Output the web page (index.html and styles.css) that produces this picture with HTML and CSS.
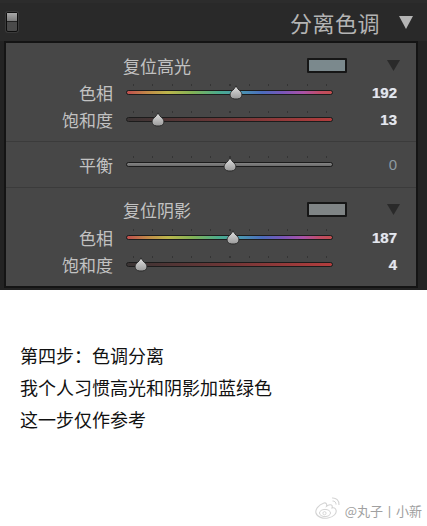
FILE: index.html
```html
<!DOCTYPE html>
<html lang="zh-CN">
<head>
<meta charset="utf-8">
<title>分离色调</title>
<link rel="stylesheet" href="styles.css">
</head>
<body>
<div class="app">
  <header class="head">
    <span class="toggle"><span class="toggle-top"></span></span>
    <h1 class="head-title">分离色调</h1>
    <svg class="head-tri" width="14" height="13" viewBox="0 0 14 13"><path d="M0 0 H14 L7 13 Z" fill="#b4b4b4"/></svg>
  </header>
  <div class="panel">
    <section class="sec sec-top">
      <div class="sec-head">
        <span class="sec-title">复位高光</span>
        <span class="swatch swatch-hi"></span>
        <svg class="sec-tri" width="13" height="11" viewBox="0 0 13 11"><path d="M0 0 H13 L6.5 11 Z" fill="#2a2a2a"/></svg>
      </div>
      <div class="row">
        <span class="label">色相</span>
        <div class="slider">
          <div class="ticks"></div>
          <div class="track track-hue"></div>
          <svg class="thumb" style="--p:0.533" width="14" height="15" viewBox="0 0 14 15"><defs><linearGradient id="tg1" x1="0" y1="0" x2="0" y2="1"><stop offset="0" stop-color="#e2e2e2"/><stop offset="1" stop-color="#9a9a9a"/></linearGradient></defs><path d="M7 0.8 C8 3 9.5 4.6 11.6 6.6 C13.6 8.6 13.2 12.4 10.4 13.5 C8.6 14.2 5.4 14.2 3.6 13.5 C0.8 12.4 0.4 8.6 2.4 6.6 C4.5 4.6 6 3 7 0.8 Z" fill="url(#tg1)" stroke="#2b2b2b" stroke-width="1"/></svg>
        </div>
        <span class="val">192</span>
      </div>
      <div class="row">
        <span class="label">饱和度</span>
        <div class="slider">
          <div class="ticks"></div>
          <div class="track track-sat"></div>
          <svg class="thumb" style="--p:0.13" width="14" height="15" viewBox="0 0 14 15"><path d="M7 0.8 C8 3 9.5 4.6 11.6 6.6 C13.6 8.6 13.2 12.4 10.4 13.5 C8.6 14.2 5.4 14.2 3.6 13.5 C0.8 12.4 0.4 8.6 2.4 6.6 C4.5 4.6 6 3 7 0.8 Z" fill="url(#tg1)" stroke="#2b2b2b" stroke-width="1"/></svg>
        </div>
        <span class="val">13</span>
      </div>
    </section>
    <section class="sec sec-mid">
      <div class="row">
        <span class="label">平衡</span>
        <div class="slider">
          <div class="ticks"></div>
          <div class="track track-bal"></div>
          <svg class="thumb" style="--p:0.5" width="14" height="15" viewBox="0 0 14 15"><path d="M7 0.8 C8 3 9.5 4.6 11.6 6.6 C13.6 8.6 13.2 12.4 10.4 13.5 C8.6 14.2 5.4 14.2 3.6 13.5 C0.8 12.4 0.4 8.6 2.4 6.6 C4.5 4.6 6 3 7 0.8 Z" fill="url(#tg1)" stroke="#2b2b2b" stroke-width="1"/></svg>
        </div>
        <span class="val val-dim">0</span>
      </div>
    </section>
    <section class="sec sec-bot">
      <div class="sec-head">
        <span class="sec-title">复位阴影</span>
        <span class="swatch swatch-lo"></span>
        <svg class="sec-tri" width="13" height="11" viewBox="0 0 13 11"><path d="M0 0 H13 L6.5 11 Z" fill="#2a2a2a"/></svg>
      </div>
      <div class="row">
        <span class="label">色相</span>
        <div class="slider">
          <div class="ticks"></div>
          <div class="track track-hue"></div>
          <svg class="thumb" style="--p:0.519" width="14" height="15" viewBox="0 0 14 15"><path d="M7 0.8 C8 3 9.5 4.6 11.6 6.6 C13.6 8.6 13.2 12.4 10.4 13.5 C8.6 14.2 5.4 14.2 3.6 13.5 C0.8 12.4 0.4 8.6 2.4 6.6 C4.5 4.6 6 3 7 0.8 Z" fill="url(#tg1)" stroke="#2b2b2b" stroke-width="1"/></svg>
        </div>
        <span class="val">187</span>
      </div>
      <div class="row">
        <span class="label">饱和度</span>
        <div class="slider">
          <div class="ticks"></div>
          <div class="track track-sat"></div>
          <svg class="thumb" style="--p:0.04" width="14" height="15" viewBox="0 0 14 15"><path d="M7 0.8 C8 3 9.5 4.6 11.6 6.6 C13.6 8.6 13.2 12.4 10.4 13.5 C8.6 14.2 5.4 14.2 3.6 13.5 C0.8 12.4 0.4 8.6 2.4 6.6 C4.5 4.6 6 3 7 0.8 Z" fill="url(#tg1)" stroke="#2b2b2b" stroke-width="1"/></svg>
        </div>
        <span class="val">4</span>
      </div>
    </section>
  </div>
</div>
<div class="notes">
  <p>第四步：色调分离</p>
  <p>我个人习惯高光和阴影加蓝绿色</p>
  <p>这一步仅作参考</p>
</div>
<div class="watermark">
  <svg class="wb-logo" width="28" height="26" viewBox="0 0 28 26">
    <path d="M10 8 C4 10 1 15 2 18 C3 22 9 24 14 23 C20 22 23 18 22 15 C21.5 13 19.5 12.5 18 13 C18.6 11 18 9.6 16 9.8 C14.5 10 13 10.8 12.5 11.2 C13 9.5 12.5 7.5 10 8 Z" fill="none" stroke="#d4d4d4" stroke-width="1.1"/>
    <ellipse cx="11" cy="18" rx="5.5" ry="3.6" fill="none" stroke="#d4d4d4" stroke-width="1"/>
    <circle cx="10.5" cy="18.2" r="1.6" fill="none" stroke="#d4d4d4" stroke-width="0.9"/>
    <path d="M18 3 C22 2.5 25.5 5.5 25 10" fill="none" stroke="#d4d4d4" stroke-width="1.1"/>
    <path d="M18.5 6 C20.5 5.8 22.3 7.4 22 9.6" fill="none" stroke="#d4d4d4" stroke-width="1"/>
  </svg>
  <span class="wb-text">@丸子丨小新</span>
</div>
</body>
</html>
```
FILE: styles.css
```css
* { box-sizing: border-box; }
html, body { margin: 0; padding: 0; }
body {
  width: 427px;
  height: 526px;
  background: #ffffff;
  font-family: "Noto Sans CJK SC", "Noto Sans", sans-serif;
  overflow: hidden;
}
.app {
  height: 290px;
  background: #232323;
  border-top: 3px solid #2c2c2c;
  padding: 0 9px 2px 4px;
  box-shadow: inset 0 1px 0 #3a3a3a;
}
.head {
  height: 38px;
  display: flex;
  align-items: center;
  background: #292929;
  margin: 0 -9px 0 -4px;
  padding: 0 14px 0 6px;
}
.toggle {
  width: 12px;
  height: 20px;
  border: 1px solid #0e0e0e;
  border-radius: 2px;
  background: #4a4a4a;
  display: flex;
  flex-direction: column;
  box-shadow: 0 0 0 1px #3a3a3a;
}
.toggle-top {
  height: 9px;
  background: linear-gradient(#a8a8a8, #7a7a7a);
  border-bottom: 1px solid #222;
}
.head-title {
  margin: 0 19px 0 auto;
  font-size: 22px;
  font-weight: 400;
  color: #b4b4b4;
  line-height: 1;
  letter-spacing: 0.5px;
}
.head-tri { display: block; margin-top: 1px; }
.panel {
  height: 247px;
  background: #474747;
  border: 2px solid #141414;
  display: flex;
  flex-direction: column;
}
.sec { border-bottom: 1px solid #3b3b3b; }
.sec-top { height: 99px; padding-top: 12px; }
.sec-mid { height: 46px; padding-top: 9px; }
.sec-bot { flex: 1; padding-top: 11px; border-bottom: 0; }
.sec-head {
  height: 20px;
  display: flex;
  align-items: center;
  padding-left: 117px;
  padding-right: 16px;
  margin-bottom: 4px;
}
.sec-bot .sec-head { margin-bottom: 5px; }
.sec-title {
  font-size: 17px;
  color: #c2c2c2;
  line-height: 1;
}
.swatch {
  margin-left: auto;
  width: 40px;
  height: 15px;
  border: 2px solid #161616;
  border-radius: 1px;
}
.swatch-hi { background: #7b898d; }
.swatch-lo { background: #7f8485; }
.sec-tri { margin-left: 40px; display: block; }
.row {
  height: 27px;
  display: grid;
  grid-template-columns: 107px 207px 1fr;
  column-gap: 13px;
  align-items: center;
  padding-right: 19px;
}
.label {
  text-align: right;
  font-size: 17px;
  color: #c2c2c2;
  line-height: 1;
}
.slider {
  position: relative;
  height: 27px;
}
.ticks {
  position: absolute;
  left: 7px;
  top: 5px;
  width: 194px;
  height: 2px;
  background: repeating-linear-gradient(to right, #343434 0 1px, transparent 1px 19.3px);
}
.track {
  margin-top: 11px;
  height: 5px;
  border: 1px solid #1c1c1c;
  border-radius: 3px;
}
.track-hue {
  background: linear-gradient(to right, #c04e4e 0%, #c28a48 10%, #bcb64c 20%, #82b256 32%, #4aab8e 45%, #4a98b0 55%, #4b6cbc 66%, #7a56b8 76%, #aa52a6 86%, #c04c66 94%, #c24e4e 100%);
}
.track-sat {
  background: linear-gradient(to right, #3a3434 0%, #6a3636 45%, #b33d3d 100%);
}
.track-bal {
  background: linear-gradient(#848484, #6c6c6c);
}
.thumb {
  position: absolute;
  top: 6px;
  left: calc(var(--p) * 193px);
}
.val {
  text-align: right;
  font-family: "Liberation Sans", Arial, sans-serif;
  font-weight: 700;
  font-size: 15px;
  color: #e2e8f0;
  text-shadow: -0.6px 0 rgba(230, 150, 80, 0.5), 0.6px 0 rgba(90, 150, 230, 0.5);
  line-height: 1;
}
.val-dim {
  color: #8d9aa2;
  font-weight: 400;
  text-shadow: none;
}
.notes {
  padding: 49px 0 0 20px;
}
.notes p {
  margin: 0;
  font-size: 18px;
  line-height: 32px;
  color: #111111;
}
.watermark {
  display: flex;
  align-items: center;
  justify-content: flex-end;
  gap: 3px;
  padding-right: 5px;
  margin-top: 60px;
}
.wb-logo { display: block; }
.wb-text {
  font-size: 13px;
  color: #a0a0a0;
  line-height: 1;
  margin-top: 4px;
}
```
